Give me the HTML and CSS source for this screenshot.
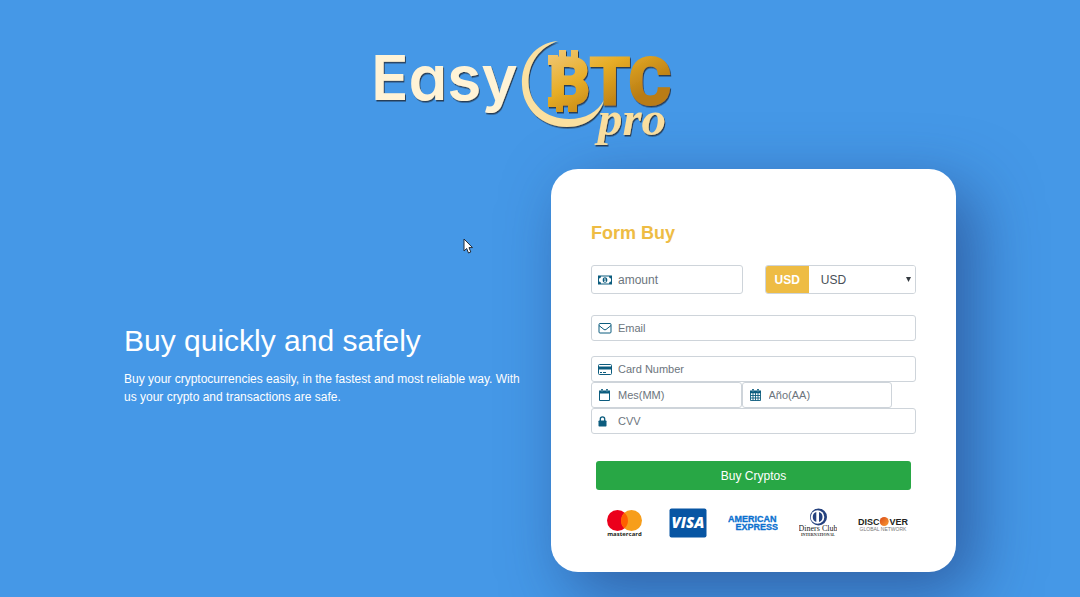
FILE: index.html
```html
<!DOCTYPE html>
<html lang="en">
<head>
<meta charset="utf-8">
<meta name="viewport" content="width=device-width, initial-scale=1">
<title>Easy BTC pro</title>
<link rel="stylesheet" href="styles.css">
</head>
<body>
<header class="header">
  <svg class="logo" viewBox="360 40 360 110" role="img" aria-label="Easy BTC pro">
    <defs>
      <linearGradient id="gold" gradientUnits="userSpaceOnUse" x1="560" y1="45" x2="600" y2="118">
        <stop offset="0" stop-color="#f0c878"/>
        <stop offset=".48" stop-color="#e7ad26"/>
        <stop offset="1" stop-color="#b97c14"/>
      </linearGradient>
      <filter id="shade" x="-10%" y="-10%" width="120%" height="130%">
        <feDropShadow dx="1" dy="1.5" stdDeviation=".6" flood-color="#23364a" flood-opacity=".9"/>
      </filter>
    </defs>
    <g filter="url(#shade)">
      <text class="logo-easy" x="371" y="100">Easy</text>
      <path fill="#fbe0a0" d="M558 41C535 43 521 62 522 85C523 110 543 127 567 127C586 127 600 116 604 100C598 112 585 119 569 119C546 119 529 104 528.500 83C528 63 540 47 558 41Z"/>
    </g>
    <g filter="url(#shade)" fill="url(#gold)">
      <path d="M559 50h7v9h-7zM571 50h7v9h-7zM556 103h7v9h-7zM568 103h9v9h-9zM548 55h10v10h-10zM548 97h10v10h-10z"/>
      <text class="logo-btc" x="549" y="104">B</text>
      <text class="logo-btc" x="590" y="104">TC</text>
    </g>
    <text class="logo-pro" x="598" y="135" filter="url(#shade)">pro</text>
  </svg>
</header>

<main class="main">
  <section class="intro">
    <h1 class="intro-title">Buy quickly and safely</h1>
    <p class="intro-text">Buy your cryptocurrencies easily, in the fastest and most reliable way. With us your crypto and transactions are safe.</p>
  </section>

  <form class="card">
    <h2 class="card-title">Form Buy</h2>
    <div class="amount-row">
      <label class="field field-large">
        <svg class="icon" viewBox="0 0 14 12" aria-hidden="true"><path fill="currentColor" fill-rule="evenodd" d="M0 1.500h14v9H0zM3 2.500a2 2 0 0 1-2 2v3a2 2 0 0 1 2 2h8a2 2 0 0 1 2-2v-3a2 2 0 0 1-2-2z"/><ellipse cx="7" cy="6" rx="2.300" ry="2.800" fill="currentColor"/><path d="M6.200 5.200L7.100 4.500v2.800M6 7.400h2.200" fill="none" stroke="#fff" stroke-width=".8"/></svg>
        <input class="input" type="text" placeholder="amount" aria-label="amount">
      </label>
      <div class="currency">
        <label class="currency-tag" for="currency">USD</label>
        <select class="select" id="currency"><option>USD</option></select>
        <svg class="arrow" viewBox="0 0 5 5" aria-hidden="true"><path d="M0 0h5L2.500 5z" fill="#343a40"/></svg>
      </div>
    </div>

    <label class="field field-email">
      <svg class="icon" viewBox="0 0 14 12" aria-hidden="true"><rect x="1" y="1.500" width="12" height="9.500" rx="1" fill="none" stroke="currentColor"/><path d="M1 3.500l5 4q1 .7 2 0l5-4" fill="none" stroke="currentColor"/></svg>
      <input class="input" type="email" placeholder="Email" aria-label="Email">
    </label>

    <label class="field">
      <svg class="icon" viewBox="0 0 14 12" aria-hidden="true"><rect x=".5" y="1.500" width="13" height="10" rx="1" fill="none" stroke="currentColor"/><path d="M.5 3.500h13v3H.5z" fill="currentColor"/><path d="M2 9.500h2M5 9.500h3" stroke="currentColor"/></svg>
      <input class="input" type="text" placeholder="Card Number" aria-label="Card Number">
    </label>
    <div class="expiry-row">
      <label class="field">
        <svg class="icon" viewBox="0 0 14 12" aria-hidden="true"><path d="M1.500 3v8.500h10V3z" fill="none" stroke="currentColor"/><path d="M1 1.500h11V4.500H1zM3 0h2v2H3zM8 0h2v2H8z" fill="currentColor"/><path d="M4 .5v2M9 .5v2" stroke="#fff" stroke-width=".6"/></svg>
        <input class="input" type="text" placeholder="Mes(MM)" aria-label="Mes(MM)">
      </label>
      <label class="field">
        <svg class="icon" viewBox="0 0 14 12" aria-hidden="true"><path d="M1.500 3v8.500h10V3zM4 4v7.500M6.500 4v7.500M9 4v7.500M1.500 6.500h10M1.500 9h10" fill="none" stroke="currentColor" stroke-width=".9"/><path d="M1 1.500h11V4.300H1zM3 0h2v2H3zM8 0h2v2H8z" fill="currentColor"/><path d="M4 .5v2M9 .5v2" stroke="#fff" stroke-width=".6"/></svg>
        <input class="input" type="text" placeholder="Año(AA)" aria-label="Año(AA)">
      </label>
    </div>
    <label class="field">
      <svg class="icon" viewBox="0 0 14 12" aria-hidden="true"><rect x=".5" y="5.500" width="8" height="6" rx=".7" fill="currentColor"/><path d="M2.300 6V4a2.200 2.200 0 0 1 4.400 0v2" fill="none" stroke="currentColor" stroke-width="1.300"/></svg>
      <input class="input" type="text" placeholder="CVV" aria-label="CVV">
    </label>

    <button class="submit" type="button">Buy Cryptos</button>

    <div class="brands">
      <svg width="44" height="30" viewBox="0 0 44 30" role="img" aria-label="mastercard">
        <circle cx="13.500" cy="12.500" r="10.500" fill="#eb001b"/><circle cx="27.500" cy="12.500" r="10.500" fill="#f79e1b"/>
        <path d="M20.500 4.700a10.500 10.500 0 0 1 0 15.600a10.500 10.500 0 0 1 0-15.600z" fill="#ff5f00"/>
        <text class="mc-text" x="20.500" y="28" text-anchor="middle">mastercard</text>
      </svg>
      <svg width="38" height="30" viewBox="0 0 38 30" role="img" aria-label="Visa">
        <rect x=".5" y=".5" width="37" height="29" rx="2" fill="#0755a3"/>
        <text class="visa-text" x="19" y="20" text-anchor="middle">VISA</text>
      </svg>
      <svg width="50" height="30" viewBox="0 0 50 30" role="img" aria-label="American Express">
        <text class="amex-text" x="0" y="14">AMERICAN</text><text class="amex-text" x="50" y="22" text-anchor="end">EXPRESS</text>
      </svg>
      <svg width="38" height="30" viewBox="0 0 38 30" role="img" aria-label="Diners Club International">
        <circle cx="19.500" cy="9" r="8.500" fill="#24417e"/><circle cx="18.500" cy="9" r="6.800" fill="#fff"/>
        <path d="M17.300 4a5.300 5.300 0 0 0 0 10zM20 4a5.300 5.300 0 0 1 0 10z" fill="#24417e"/>
        <text class="diners-text" x="19" y="23" text-anchor="middle">Diners Club</text>
        <text class="diners-sub" x="19" y="28" text-anchor="middle">INTERNATIONAL</text>
      </svg>
      <svg width="50" height="30" viewBox="0 0 50 30" role="img" aria-label="Discover Global Network">
        <defs><linearGradient id="disc" x1="0" y1="0" x2="1" y2="1"><stop offset="0" stop-color="#d84a18"/><stop offset="1" stop-color="#fb9b32"/></linearGradient></defs>
        <text class="disc-text" x="0" y="17">DISC</text><circle cx="26.200" cy="13.500" r="4.500" fill="url(#disc)"/><text class="disc-text" x="50" y="17" text-anchor="end">VER</text>
        <text class="disc-sub" x="25" y="23" text-anchor="middle">GLOBAL NETWORK</text>
      </svg>
    </div>
  </form>
</main>

<svg class="pointer" viewBox="0 0 10 16" aria-hidden="true"><path d="M1 1v12l2.700-2.500L5.500 15l2.300-1L6 9.600h3.500z" fill="#fff" stroke="#222b38"/></svg>
</body>
</html>
```
FILE: styles.css
```css
* { box-sizing: border-box; }

body {
  margin: 0;
  padding: 40px 24px 25px;
  position: relative;
  min-height: 100vh;
  overflow-x: hidden;
  background: #4598e7;
  color: #fff;
  font-family: "Liberation Sans", Arial, sans-serif;
  font-size: 12px;
  line-height: 18px;
}

.header { display: flex; justify-content: center; margin-bottom: 19px; }
.logo { width: 360px; max-width: 100%; height: auto; }
.logo-easy { font: 600 62px Inter, sans-serif; font-feature-settings: "cv11"; fill: #fff3d6; }
.logo-btc { font: 700 64px Roboto, sans-serif; fill: url(#gold); stroke: url(#gold); stroke-width: 3px; }
.logo-pro { font: italic 700 49px "Liberation Serif", serif; fill: #fbe0a0; }

.main {
  display: grid;
  grid-template-columns: repeat(2, minmax(0, 1fr));
  gap: 22px;
  align-items: center;
  max-width: 832px;
  margin: 0 auto;
}

.intro-title { margin: 0 0 11px; font-size: 30px; font-weight: 400; line-height: 36px; }
.intro-text { margin: 0 0 12px; }

.card {
  padding: 53px 40px 34px;
  border-radius: 27px;
  background: #fff;
  box-shadow: 18px 20px 64px rgba(30, 50, 110, .55);
}
.card-title { margin: 0 0 21px; color: #eebc44; font-size: 18px; line-height: 22px; }

.amount-row { display: grid; grid-template-columns: repeat(2, minmax(0, 1fr)); gap: 22px; margin-bottom: 21px; }
.expiry-row { display: grid; grid-template-columns: repeat(2, minmax(0, 1fr)); padding-right: 24px; }

.field {
  display: flex;
  align-items: center;
  height: 26px;
  padding-left: 6px;
  border: 1px solid #ced4da;
  border-radius: 3px;
  background: #fff;
  color: #0c5c7e;
  font-size: 11px;
}
.field-large { height: 29px; font-size: 12px; }
.field-email { margin-bottom: 15px; }
.icon { flex: none; width: 14px; height: 12px; margin-right: 6px; }
.input {
  flex: 1;
  min-width: 0;
  padding: 0;
  border: 0;
  outline: 0;
  background: transparent;
  color: #495057;
  font: inherit;
}
.input::placeholder { color: #6c757d; opacity: 1; }

.currency {
  display: flex;
  position: relative;
  height: 29px;
  border: 1px solid #ced4da;
  border-radius: 3px;
  overflow: hidden;
}
.currency-tag {
  display: flex;
  align-items: center;
  padding: 0 9px;
  background: #eebc44;
  font-weight: 700;
}
.select {
  flex: 1;
  min-width: 0;
  padding: 0 12px;
  border: 0;
  appearance: none;
  background: #fff;
  color: #495057;
  font: inherit;
}
.arrow { position: absolute; right: 4px; top: 11px; width: 5px; height: 5px; pointer-events: none; }

.submit {
  display: block;
  width: calc(100% - 10px);
  height: 29px;
  margin: 27px 5px 18px;
  border: 0;
  border-radius: 3px;
  background: #28a745;
  color: #fff;
  font: inherit;
}

.brands { display: flex; justify-content: space-between; padding: 0 8px 0 13px; }
.mc-text { font: 700 6px "Open Sans", sans-serif; fill: #231f20; }
.visa-text { font: italic 800 15px "Open Sans", sans-serif; fill: #fff; }
.amex-text { font: 700 9px "Liberation Sans", sans-serif; fill: #0b70cf; stroke: #0b70cf; stroke-width: .3px; }
.diners-text { font: 8px "Liberation Serif", serif; fill: #222; }
.diners-sub { font: 700 4px "Liberation Serif", serif; fill: #333; }
.disc-text { font: 700 9px "Liberation Sans", sans-serif; fill: #231f20; }
.disc-sub { font: 5px "Liberation Sans", sans-serif; fill: #777; }

.pointer { position: absolute; left: 463px; top: 238px; width: 10px; height: 16px; }

@media (max-width: 720px) {
  .main { grid-template-columns: 1fr; }
}
```
